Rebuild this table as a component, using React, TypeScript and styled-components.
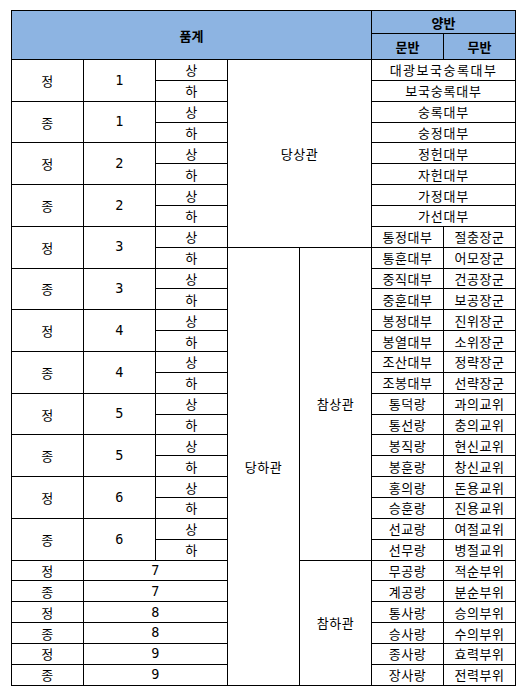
import React from 'react';
import styled, { createGlobalStyle } from 'styled-components';

const GlobalStyle = createGlobalStyle`
  body {
    margin: 0;
    background: #ffffff;
    font-family: "Noto Sans CJK KR", "Noto Sans", sans-serif;
  }
`;

const Page = styled.div`
  padding: 10px 0 0 11px;
`;

const Table = styled.table`
  width: 504px;
  table-layout: fixed;
  border-collapse: collapse;
  border: 1px solid #000;
  color: #000;
  font-size: 13px;
  line-height: 1;
`;

const HeadRow = styled.tr<{ $h: number }>`
  height: ${(p) => p.$h}px;
`;

const BodyRow = styled.tr`
  height: 20.87px;
`;

const HeadCell = styled.th`
  background-color: #8db4e2;
  border: 1px solid #000;
  font-weight: 700;
  font-size: 13px;
  padding: 0;
  text-align: center;
  vertical-align: middle;
`;

const Cell = styled.td<{ $spacing?: number }>`
  border: 1px solid #000;
  padding: 0;
  text-align: center;
  vertical-align: middle;
  white-space: nowrap;
  letter-spacing: ${(p) => (p.$spacing ?? 0.5)}px;
`;

const NumCell = styled(Cell)`
  font-family: "DejaVu Sans Mono", "Liberation Mono", monospace;
  font-size: 13.5px;
`;

type Grade = { side: string; num: string };

// 1품 ~ 6품: 상/하 두 줄씩
const upperGrades: Grade[] = [
  { side: '정', num: '1' },
  { side: '종', num: '1' },
  { side: '정', num: '2' },
  { side: '종', num: '2' },
  { side: '정', num: '3' },
  { side: '종', num: '3' },
  { side: '정', num: '4' },
  { side: '종', num: '4' },
  { side: '정', num: '5' },
  { side: '종', num: '5' },
  { side: '정', num: '6' },
  { side: '종', num: '6' },
];

const lowerGrades: Grade[] = [
  { side: '정', num: '7' },
  { side: '종', num: '7' },
  { side: '정', num: '8' },
  { side: '종', num: '8' },
  { side: '정', num: '9' },
  { side: '종', num: '9' },
];

// [문반, 무반] — 무반이 없으면 문반이 두 칸을 차지
const titles: [string, string?][] = [
  ['대광보국숭록대부'],
  ['보국숭록대부'],
  ['숭록대부'],
  ['숭정대부'],
  ['정헌대부'],
  ['자헌대부'],
  ['가정대부'],
  ['가선대부'],
  ['통정대부', '절충장군'],
  ['통훈대부', '어모장군'],
  ['중직대부', '건공장군'],
  ['중훈대부', '보공장군'],
  ['봉정대부', '진위장군'],
  ['봉열대부', '소위장군'],
  ['조산대부', '정략장군'],
  ['조봉대부', '선략장군'],
  ['통덕랑', '과의교위'],
  ['통선랑', '충의교위'],
  ['봉직랑', '현신교위'],
  ['봉훈랑', '창신교위'],
  ['홍의랑', '돈용교위'],
  ['승훈랑', '진용교위'],
  ['선교랑', '여절교위'],
  ['선무랑', '병절교위'],
  ['무공랑', '적순부위'],
  ['계공랑', '분순부위'],
  ['통사랑', '승의부위'],
  ['승사랑', '수의부위'],
  ['종사랑', '효력부위'],
  ['장사랑', '전력부위'],
];

const groupCells = (i: number) => {
  if (i === 0) return <Cell colSpan={2} rowSpan={9}>당상관</Cell>;
  if (i === 9)
    return (
      <>
        <Cell rowSpan={21}>당하관</Cell>
        <Cell rowSpan={15}>참상관</Cell>
      </>
    );
  if (i === 24) return <Cell rowSpan={6}>참하관</Cell>;
  return null;
};

const titleCells = (i: number) => {
  const [civil, military] = titles[i];
  if (!military)
    return (
      <Cell colSpan={2} $spacing={i === 0 ? 1.5 : 0.8}>
        {civil}
      </Cell>
    );
  return (
    <>
      <Cell>{civil}</Cell>
      <Cell>{military}</Cell>
    </>
  );
};

const App: React.FC = () => {
  const rows: React.ReactNode[] = [];

  upperGrades.forEach((g, gi) => {
    ['상', '하'].forEach((half, hi) => {
      const i = gi * 2 + hi;
      rows.push(
        <BodyRow key={i}>
          {hi === 0 && (
            <>
              <Cell rowSpan={2}>{g.side}</Cell>
              <NumCell rowSpan={2}>{g.num}</NumCell>
            </>
          )}
          <Cell>{half}</Cell>
          {groupCells(i)}
          {titleCells(i)}
        </BodyRow>
      );
    });
  });

  lowerGrades.forEach((g, gi) => {
    const i = 24 + gi;
    rows.push(
      <BodyRow key={i}>
        <Cell>{g.side}</Cell>
        <NumCell colSpan={2}>{g.num}</NumCell>
        {groupCells(i)}
        {titleCells(i)}
      </BodyRow>
    );
  });

  return (
    <Page>
      <GlobalStyle />
      <Table>
        <colgroup>
          {Array.from({ length: 7 }).map((_, k) => (
            <col key={k} style={{ width: 72 }} />
          ))}
        </colgroup>
        <thead>
          <HeadRow $h={23}>
            <HeadCell colSpan={5} rowSpan={2}>
              품계
            </HeadCell>
            <HeadCell colSpan={2}>양반</HeadCell>
          </HeadRow>
          <HeadRow $h={26}>
            <HeadCell>문반</HeadCell>
            <HeadCell>무반</HeadCell>
          </HeadRow>
        </thead>
        <tbody>{rows}</tbody>
      </Table>
    </Page>
  );
};

export default App;
